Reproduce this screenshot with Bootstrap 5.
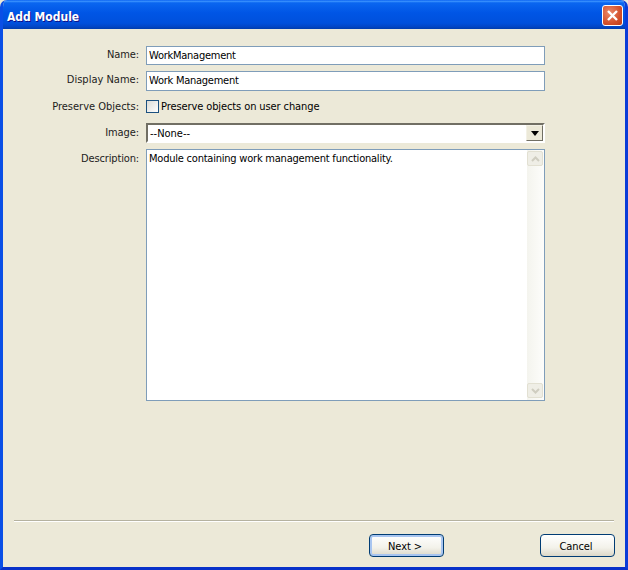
<!DOCTYPE html>
<html lang="en">
<head>
<meta charset="utf-8">
<title>Add Module</title>
<link href="https://cdn.jsdelivr.net/npm/bootstrap@5.3.0/dist/css/bootstrap.min.css" rel="stylesheet">
<style>
html,body{margin:0;padding:0;background:#ece9d8;overflow:hidden}
body{font-family:"DejaVu Sans Condensed","DejaVu Sans",sans-serif;font-size:11px;line-height:13px;color:#000}
.xp-window{width:628px;height:570px;background:#ece9d8;border-left:3px solid #0a4fe6;border-right:3px solid #0a3cd8;border-bottom:3px solid #0831c9;border-top:0;border-radius:7px 7px 0 0;overflow:hidden}
.xp-titlebar{height:29px;flex:none;margin:0 -3px;padding:0 5px 0 7px;background:linear-gradient(180deg,#0058ee 0,#3d95ff 4%,#0a66f0 10%,#0055e5 45%,#0050dc 80%,#0246c6 92%,#003dad 100%)}
.xp-title{font-weight:700;font-size:12px;color:#fff;text-shadow:1px 1px 0 #0f1089;padding-top:5px}
.xp-close{width:21px;height:21px;padding:0;margin-top:2px;border:1px solid #fff;border-radius:3px;background:radial-gradient(circle at 35% 35%,#ea8a6c,#d4512c 60%,#bf3b16)}
.xp-body{padding:17px 0 0 0;min-height:0}
.xp-form{display:grid;grid-template-columns:136px 399px;grid-template-rows:25px 29px 23px 26px 252px;align-content:start;column-gap:7px;width:542px}
.xp-label{text-align:right;color:#1c1c1c;white-space:nowrap}
.l-name{padding-top:2px;letter-spacing:-.1px}
.l-disp{padding-top:2px}
.l-pres{padding-top:0}
.l-img{padding-top:3px;letter-spacing:-.1px}
.l-desc{padding-top:3px;letter-spacing:-.15px}
.xp-input{width:399px;border:1px solid #7f9db9;background:#fff;padding:0 2px;font:inherit;letter-spacing:-.25px;color:#000;display:block;border-radius:0;outline:0}
.f-name{height:19px}
.f-disp{height:20px;padding-bottom:2px}
.xp-check{width:13px;height:13px;border:1px solid #1c5180;background:linear-gradient(135deg,#dcdcd7,#fff);display:block;margin:0}
.xp-checkwrap{gap:2px;letter-spacing:-.1px}
.xp-combo{height:20px;background:#fff;border:2px solid;border-color:#716f64 #fff #fff #716f64;padding:0 0 0 2px}
.xp-combo-btn{width:17px;height:16px;background:#ece9d8;border:1px solid;border-color:#f3f1e6 #716f64 #716f64 #f3f1e6}
.xp-area-wrap{width:399px;height:252px;border:1px solid #7f9db9;background:#fff}
.xp-area-text{padding:2px;letter-spacing:-.22px}
.xp-scroll{width:17px;padding:1px 1px 2px 0;background:linear-gradient(90deg,#f4f4ee,#fdfdfb)}
.xp-sbtn{width:16px;height:15px;background:#efeee6;border:1px solid #e2e0d2;border-radius:2px}
.xp-rule{height:2px;flex:none;margin:0 11px;background:#b5b2a0;border-bottom:1px solid #fff}
.xp-foot{height:45px;flex:none;padding:12px 10px 0 0}
.xp-btn{width:75px;height:23px;padding:2px 3px 0 0;font:inherit;letter-spacing:-.1px;color:#000;border:1px solid #003c74;border-radius:4px;background:linear-gradient(180deg,#fff,#f3f2ea 60%,#dcd8c8)}
.xp-default{box-shadow:inset 0 0 0 2px #a8c5f0;margin-right:96px}
</style>
</head>
<body>
<div class="xp-window d-flex flex-column">
  <div class="xp-titlebar d-flex align-items-center justify-content-between">
    <span class="xp-title">Add Module</span>
    <button class="xp-close d-flex align-items-center justify-content-center" type="button" aria-label="Close">
      <svg width="13" height="13" viewBox="0 0 13 13"><path d="M2 2l9 9M11 2l-9 9" stroke="#fff" stroke-width="2.4" fill="none"/></svg>
    </button>
  </div>
  <div class="xp-body flex-grow-1 d-flex flex-column">
    <div class="xp-form flex-grow-1">
      <div class="xp-label l-name">Name:</div>
      <div><input class="xp-input f-name" value="WorkManagement"></div>
      <div class="xp-label l-disp">Display Name:</div>
      <div><input class="xp-input f-disp" value="Work Management"></div>
      <div class="xp-label l-pres">Preserve Objects:</div>
      <div class="xp-checkwrap d-flex align-items-start"><span class="xp-check"></span><span>Preserve objects on user change</span></div>
      <div class="xp-label l-img">Image:</div>
      <div><div class="xp-combo d-flex align-items-center justify-content-between"><span>--None--</span><span class="xp-combo-btn d-flex align-items-center justify-content-center"><svg width="8" height="5" viewBox="0 0 8 5"><path d="M0 0h8L4 5z" fill="#000"/></svg></span></div></div>
      <div class="xp-label l-desc">Description:</div>
      <div><div class="xp-area-wrap d-flex">
        <div class="xp-area-text flex-grow-1">Module containing work management functionality.</div>
        <div class="xp-scroll d-flex flex-column justify-content-between">
          <span class="xp-sbtn d-flex align-items-center justify-content-center"><svg width="9" height="6" viewBox="0 0 9 6"><path d="M1 5l3.5-3.5L8 5" stroke="#cfcdc0" stroke-width="2" fill="none"/></svg></span>
          <span class="xp-sbtn d-flex align-items-center justify-content-center"><svg width="9" height="6" viewBox="0 0 9 6"><path d="M1 1l3.5 3.5L8 1" stroke="#cfcdc0" stroke-width="2" fill="none"/></svg></span>
        </div>
      </div></div>
    </div>
    <div class="xp-rule"></div>
    <div class="xp-foot d-flex justify-content-end">
      <button class="xp-btn xp-default" type="button">Next &gt;</button>
      <button class="xp-btn" type="button">Cancel</button>
    </div>
  </div>
</div>
</body>
</html>
